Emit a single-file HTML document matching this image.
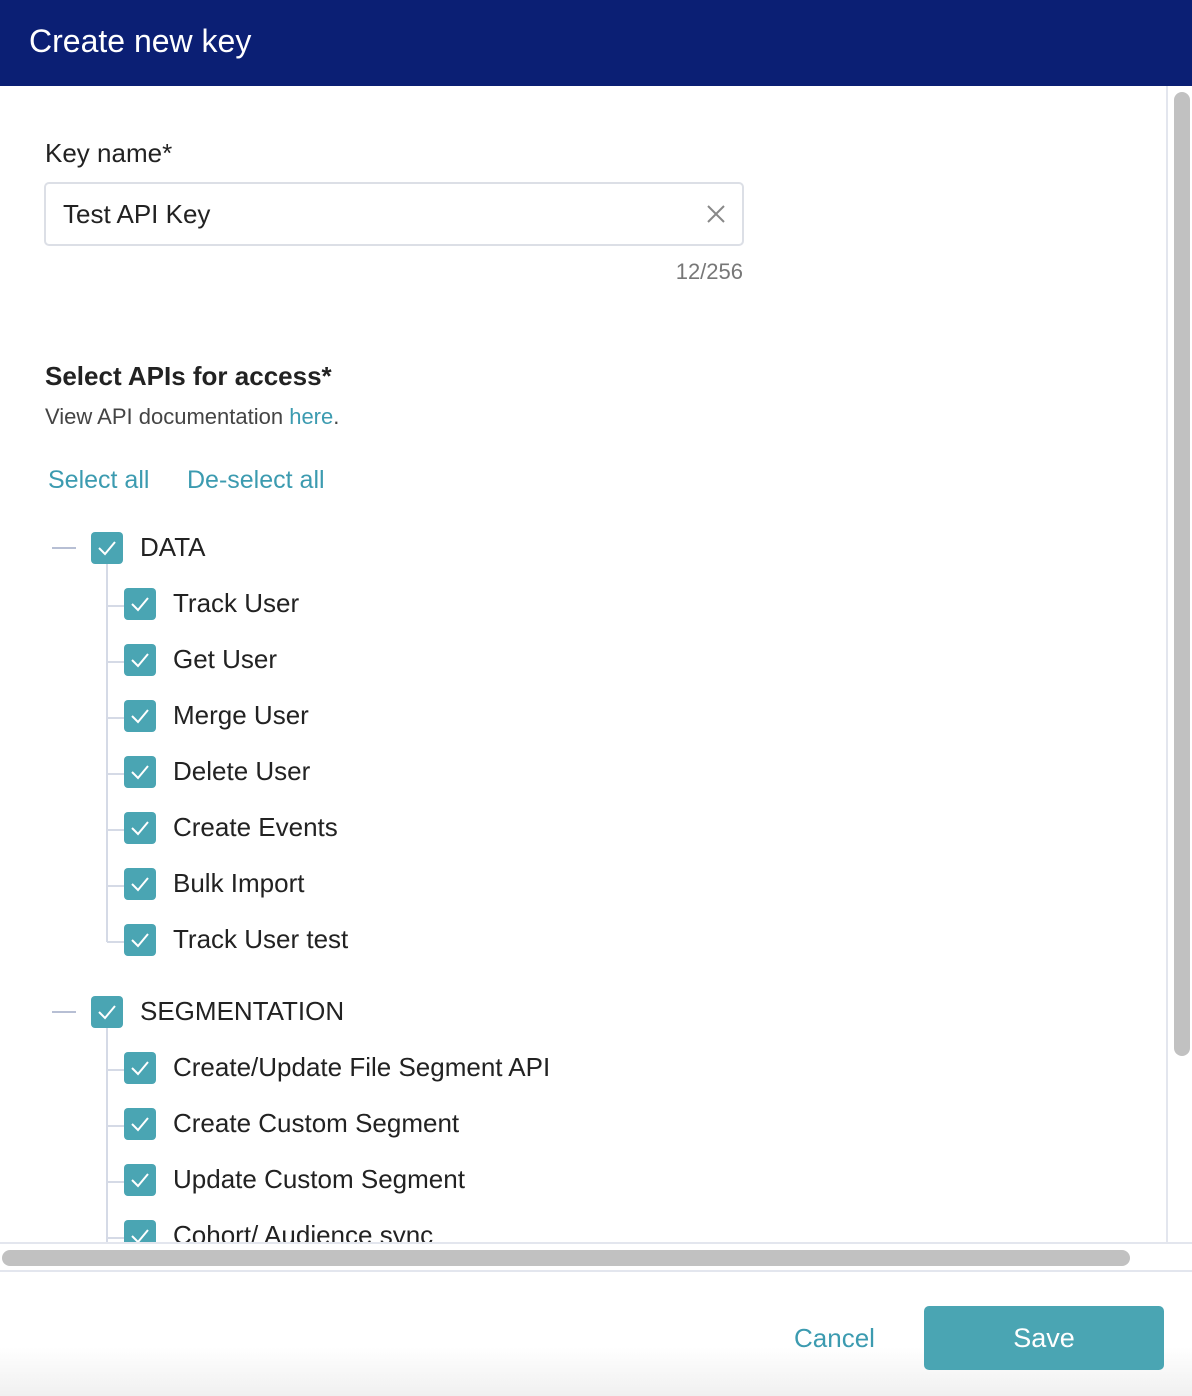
<!DOCTYPE html>
<html><head><style>
*{box-sizing:border-box;margin:0;padding:0}
body{width:1192px;height:1396px;position:relative;background:#fff;font-family:"Liberation Sans",sans-serif;color:#222;overflow:hidden}
.hdr{position:absolute;left:0;top:0;width:1192px;height:86px;background:#0b1f74;color:#fff;font-size:32px;padding:23px 0 0 29px}
.abs{position:absolute;white-space:nowrap}
.cb{position:absolute;width:32px;height:32px;background:#4aa5b3;border-radius:4px}
.cb svg{position:absolute;left:6px;top:7px}
.lbl{position:absolute;font-size:26px;color:#222;white-space:nowrap}
.teal{color:#3c9bb0}
.vl{position:absolute;width:2px;background:#d5dae6}
.hl{position:absolute;height:2px;background:#d5dae6}
</style></head><body>
<div class="hdr">Create new key</div>
<div class="abs" style="left:45px;top:138px;font-size:26px">Key name*</div>
<div class="abs" style="left:44px;top:182px;width:700px;height:64px;border:2px solid #dcdfe6;border-radius:5px"></div>
<div class="abs" style="left:63px;top:199px;font-size:26px">Test API Key</div>
<svg class="abs" style="left:707px;top:205px" width="18" height="18"><path d="M1 1L17 17M17 1L1 17" stroke="#888" stroke-width="2"/></svg>
<div class="abs" style="right:449px;top:259px;font-size:22px;color:#777">12/256</div>
<div class="abs" style="left:45px;top:361px;font-size:26px;font-weight:bold">Select APIs for access*</div>
<div class="abs" style="left:45px;top:404px;font-size:22px;color:#444">View API documentation <span class="teal">here</span>.</div>
<div class="abs teal" style="left:48px;top:466px;font-size:25px">Select all</div>
<div class="abs teal" style="left:187px;top:466px;font-size:25px">De-select all</div>

<div class="abs" style="left:0;top:0;width:1166px;height:1242px;overflow:hidden">
<div class="hl" style="left:52px;top:547px;width:24px;background:#b7bfd4"></div>
<div class="vl" style="left:106px;top:564px;height:378px"></div>
<div class="hl" style="left:52px;top:1011px;width:24px;background:#b7bfd4"></div>
<div class="vl" style="left:106px;top:1028px;height:214px"></div>
<div id="tree"></div>
</div>
<script>
var ck='<svg width="20" height="18"><path d="M2 9L8 15L18 3" stroke="#fff" stroke-width="2" fill="none"/></svg>';
var h='';
function parent(y,t){h+='<div class="cb" style="left:91px;top:'+(y-16)+'px">'+ck+'</div><div class="lbl" style="left:140px;top:'+(y-16)+'px">'+t+'</div>';}
function child(y,t){h+='<div class="hl" style="left:107px;top:'+(y+1)+'px;width:17px"></div><div class="cb" style="left:124px;top:'+(y-16)+'px">'+ck+'</div><div class="lbl" style="left:173px;top:'+(y-16)+'px">'+t+'</div>';}
parent(548,'DATA');
['Track User','Get User','Merge User','Delete User','Create Events','Bulk Import','Track User test'].forEach(function(t,i){child(604+56*i,t)});
parent(1012,'SEGMENTATION');
['Create/Update File Segment API','Create Custom Segment','Update Custom Segment','Cohort/ Audience sync'].forEach(function(t,i){child(1068+56*i,t)});
document.getElementById('tree').innerHTML=h;
</script>
<div class="abs" style="left:0;top:1242px;width:1192px;height:30px;background:#fff;border-top:2px solid #e3e6ee;border-bottom:2px solid #e3e6ee"></div>
<div class="abs" style="left:2px;top:1250px;width:1128px;height:16px;border-radius:8px;background:#c1c1c1"></div>
<div class="abs" style="left:1166px;top:86px;width:2px;height:1157px;background:#e3e6ee"></div>
<div class="abs" style="left:1174px;top:92px;width:16px;height:964px;border-radius:8px;background:#c1c1c1"></div>
<div class="abs" style="left:0;top:1274px;width:1192px;height:122px;background:linear-gradient(#fff 60%,#f0f0f0)"></div>
<div class="abs teal" style="left:794px;top:1323px;font-size:26px">Cancel</div>
<div class="abs" style="left:924px;top:1306px;width:240px;height:64px;background:#4aa5b3;border-radius:5px;color:#fff;font-size:27px;text-align:center;line-height:64px">Save</div>
</body></html>
